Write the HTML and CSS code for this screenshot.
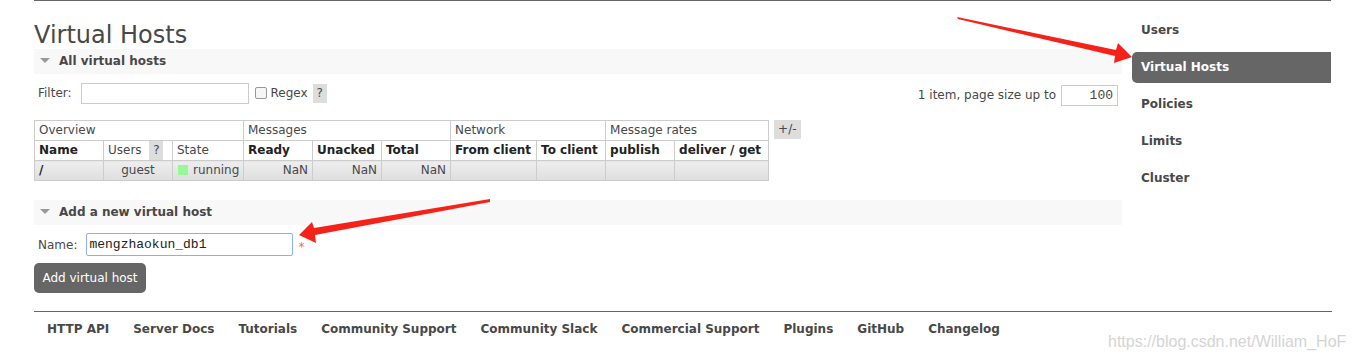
FILE: index.html
```html
<!DOCTYPE html>
<html lang="en">
<head>
<meta charset="UTF-8">
<title>RabbitMQ Management: Virtual Hosts</title>
<link rel="stylesheet" href="styles.css">
</head>
<body>

<div class="wrap">
  <div class="main">
    <h1>Virtual Hosts</h1>

    <div class="section">
      <h2><span class="tri"></span>All virtual hosts</h2>
      <div class="filter-row">
        <div class="filter-left">
          <label class="lbl">Filter:</label>
          <input class="filter-input" type="text">
          <input class="check" type="checkbox">
          <span class="regex">Regex</span>
          <span class="help">?</span>
        </div>
        <div class="filter-right">
          <span>1 item, page size up to</span>
          <input class="page-size" type="text" value="100">
        </div>
      </div>

      <div class="table-row">
        <table class="list">
          <colgroup>
            <col class="c69"><col class="c69"><col class="c71"><col class="c69"><col class="c69">
            <col class="c69"><col class="c86"><col class="c69"><col class="c69"><col class="c94">
          </colgroup>
          <tr class="group">
            <th colspan="3">Overview</th>
            <th colspan="3">Messages</th>
            <th colspan="2">Network</th>
            <th colspan="2">Message rates</th>
          </tr>
          <tr class="heads">
            <th>Name</th>
            <th class="plain">Users <span class="help">?</span></th>
            <th class="plain">State</th>
            <th>Ready</th>
            <th>Unacked</th>
            <th>Total</th>
            <th>From client</th>
            <th>To client</th>
            <th>publish</th>
            <th>deliver / get</th>
          </tr>
          <tr class="data">
            <td class="name">/</td>
            <td class="center">guest</td>
            <td><span class="green"></span>running</td>
            <td class="num">NaN</td>
            <td class="num">NaN</td>
            <td class="num">NaN</td>
            <td></td>
            <td></td>
            <td></td>
            <td></td>
          </tr>
        </table>
        <span class="toggle">+/-</span>
      </div>
    </div>

    <div class="section">
      <h2><span class="tri"></span>Add a new virtual host</h2>
      <div class="name-row">
        <label class="lbl">Name:</label>
        <input class="name-input" type="text" value="mengzhaokun_db1">
        <span class="req">*</span>
      </div>
      <button class="add-btn">Add virtual host</button>
    </div>
  </div>

  <nav class="side">
    <a href="#">Users</a>
    <a href="#" class="active">Virtual Hosts</a>
    <a href="#">Policies</a>
    <a href="#">Limits</a>
    <a href="#">Cluster</a>
  </nav>
</div>

<div class="footer">
  <a href="#">HTTP API</a>
  <a href="#">Server Docs</a>
  <a href="#">Tutorials</a>
  <a href="#">Community Support</a>
  <a href="#">Community Slack</a>
  <a href="#">Commercial Support</a>
  <a href="#">Plugins</a>
  <a href="#">GitHub</a>
  <a href="#">Changelog</a>
</div>

<!-- annotation arrows drawn over the screenshot -->
<svg class="arrows" width="1354" height="362" viewBox="0 0 1354 362">
  <polygon points="957,17 1116,50 1118,43 1132,57 1114,63 1115,56 958,19" fill="#f5221a"/>
  <polygon points="490,199 314,228 312,222 299,235 316,243 315,235 490,202" fill="#f5221a"/>
</svg>

<div class="watermark">https://blog.csdn.net/William_HoF</div>

</body>
</html>
```

FILE: styles.css
```css
body {
  margin: 0;
  font-family: "DejaVu Sans", Verdana, sans-serif;
  font-size: 12px;
  color: #484848;
  background: #fff;
}

.wrap {
  display: flex;
  margin-left: 34px;
  width: 1297px;
  border-top: 1px solid #666;
}

.main {
  width: 1088px;
}

h1 {
  margin: 21px 0 0;
  font-size: 24px;
  font-weight: normal;
  line-height: 27px;
  color: #484848;
}

h2 {
  margin: 0;
  height: 25px;
  line-height: 25px;
  background: #f8f8f8;
  font-size: 12px;
  font-weight: bold;
  padding-left: 6px;
}

.tri {
  display: inline-block;
  width: 0;
  height: 0;
  border-left: 5.5px solid transparent;
  border-right: 5.5px solid transparent;
  border-top: 5px solid #999;
  margin-right: 9px;
  vertical-align: 2px;
}

.filter-row {
  display: flex;
  justify-content: space-between;
  align-items: center;
  margin-top: 8px;
  height: 22px;
  padding: 0 4px;
}

.filter-left,
.filter-right {
  display: flex;
  align-items: center;
}

.lbl {
  margin-right: 9px;
}

.filter-input {
  width: 168px;
  height: 21px;
  box-sizing: border-box;
  border: 1px solid #ccc;
  margin: 0;
}

.check {
  -webkit-appearance: none;
  appearance: none;
  width: 12px;
  height: 12px;
  border: 1px solid #999;
  border-radius: 2px;
  background: #f6f6f6;
  margin: 0 4px 0 6px;
}

.regex {
  margin-right: 5px;
}

.help {
  display: inline-block;
  background: #ddd;
  width: 14px;
  height: 19px;
  line-height: 19px;
  text-align: center;
  color: #484848;
}

.filter-right {
  margin-top: 4px;
}

.page-size {
  width: 57px;
  height: 21px;
  box-sizing: border-box;
  border: 1px solid #ccc;
  margin: 0 0 0 5px;
  text-align: right;
  font-family: "Liberation Mono", monospace;
  font-size: 13px;
  padding-right: 4px;
  color: #484848;
}

.table-row {
  display: flex;
  align-items: flex-start;
  margin-top: 16px;
}

.list {
  border-collapse: collapse;
  table-layout: fixed;
  width: 734px;
}

.c69 { width: 69px; }
.c71 { width: 71px; }
.c86 { width: 86px; }
.c94 { width: 94px; }

.list th,
.list td {
  border: 1px solid #ccc;
  padding: 0 4px;
  line-height: 19px;
  text-align: left;
  white-space: nowrap;
  overflow: hidden;
}

.list .group th {
  font-weight: normal;
}

.list .heads th {
  font-weight: bold;
  color: #222;
}

.list .heads th.plain {
  font-weight: normal;
  color: #484848;
}

.list .heads .help {
  margin-left: 4px;
}

.list .data td {
  background: linear-gradient(#eeeeee, #dedede);
}

.list td.name {
  font-weight: bold;
  color: #222;
}

.list td.center {
  text-align: center;
}

.list td.num {
  text-align: right;
}

.green {
  display: inline-block;
  width: 10px;
  height: 10px;
  background: #98f898;
  margin: 0 5px 0 1px;
  vertical-align: -1px;
}

.toggle {
  margin-left: 5px;
  background: #ddd;
  padding: 0 4px;
  line-height: 19px;
}

.section + .section {
  margin-top: 19px;
}

.name-row {
  display: flex;
  align-items: center;
  margin-top: 8px;
  padding-left: 4px;
}

.name-input {
  width: 207px;
  height: 23px;
  box-sizing: border-box;
  border: 1px solid #8ab1ea;
  border-radius: 2px;
  margin: 0;
  font-family: "Liberation Mono", monospace;
  font-size: 13px;
  color: #222;
  padding: 0 2px;
}

.req {
  color: #f66;
  margin-left: 5px;
  margin-top: 5px;
  font-size: 12px;
}

.add-btn {
  display: block;
  margin-top: 7px;
  width: 112px;
  height: 30px;
  border: none;
  border-radius: 5px;
  background: #666;
  color: #fff;
  font-family: "DejaVu Sans", Verdana, sans-serif;
  font-size: 12px;
  padding: 0;
}

.side {
  width: 199px;
  margin-left: 10px;
  padding-top: 14px;
}

.side a {
  display: block;
  height: 31px;
  line-height: 31px;
  margin-bottom: 6px;
  padding-left: 9px;
  font-weight: bold;
  color: #484848;
  text-decoration: none;
}

.side a.active {
  background: #666;
  color: #fff;
  border-radius: 5px 0 0 5px;
}

.footer {
  margin: 18px 0 0 34px;
  width: 1297px;
  border-top: 1px solid #666;
  padding: 10px 0 0 1px;
  display: flex;
}

.footer a {
  padding: 0 12px;
  font-weight: bold;
  line-height: 14px;
  color: #484848;
  text-decoration: none;
}

.arrows {
  position: absolute;
  left: 0;
  top: 0;
  pointer-events: none;
}

.watermark {
  position: absolute;
  left: 1108px;
  top: 333px;
  font-family: "Liberation Sans", Arial, sans-serif;
  font-size: 16px;
  color: #d4d4d4;
}
```
